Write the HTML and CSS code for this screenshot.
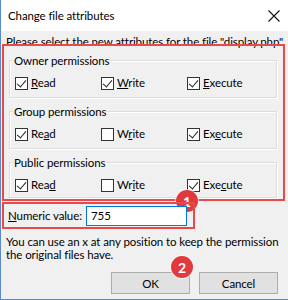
FILE: index.html
```html
<!DOCTYPE html>
<html>
<head>
<meta charset="utf-8">
<link rel="stylesheet" href="styles.css">
</head>
<body>
<div class="window">
  <div class="titlebar">
    <span class="title">Change file attributes</span>
    <svg class="close" width="12" height="12" viewBox="0 0 12 12"><path d="M0.5 0.5 L11.5 11.5 M11.5 0.5 L0.5 11.5" stroke="#111" stroke-width="1.1" fill="none"/></svg>
  </div>
  <div class="content">
    <div class="prompt">Please select the new attributes for the file "display.php".</div>
    <div class="hl hl-perms">
      <div class="group">
        <div class="legend">Owner permissions</div>
        <div class="row">
          <label class="cb"><span class="box on"></span><span><u>R</u>ead</span></label>
          <label class="cb"><span class="box on"></span><span><u>W</u>rite</span></label>
          <label class="cb"><span class="box on"></span><span><u>E</u>xecute</span></label>
        </div>
      </div>
      <div class="group">
        <div class="legend">Group permissions</div>
        <div class="row">
          <label class="cb"><span class="box on"></span><span>Re<u>a</u>d</span></label>
          <label class="cb"><span class="box"></span><span>W<u>r</u>ite</span></label>
          <label class="cb"><span class="box on"></span><span>Ex<u>e</u>cute</span></label>
        </div>
      </div>
      <div class="group last">
        <div class="legend">Public permissions</div>
        <div class="row">
          <label class="cb"><span class="box on"></span><span>Rea<u>d</u></span></label>
          <label class="cb"><span class="box"></span><span>Wr<u>i</u>te</span></label>
          <label class="cb"><span class="box on"></span><span>Exe<u>c</u>ute</span></label>
        </div>
      </div>
      <span class="badge badge1">1</span>
    </div>
    <div class="hl hl-num">
      <span class="numlabel"><u>N</u>umeric value:</span>
      <span class="input">755</span>
    </div>
    <div class="note">You can use an x at any position to keep the permission<br>the original files have.</div>
    <div class="buttons">
      <span class="btn">OK<span class="badge badge2">2</span></span>
      <span class="btn">Cancel</span>
    </div>
  </div>
</div>
</body>
</html>
```
FILE: styles.css
```css
* { box-sizing: border-box; }
html, body { margin: 0; padding: 0; background: #fff; }
body { font-family: "Lato", "Noto Sans", sans-serif; font-size: 11.5px; letter-spacing: -0.1px; color: #000; }
.window {
  width: 288px; height: 300px;
  border-left: 1px solid #5b8ac8;
  border-bottom: 1px solid #5b8ac8;
  display: flex; flex-direction: column;
  background: #f0f0f0;
  overflow: hidden;
}
.titlebar {
  height: 31px; background: #fff; flex: none;
  display: flex; align-items: center; justify-content: space-between;
  padding: 0 8px 0 7px;
}
.title { font-size: 11.5px; }
.close { display: block; }
.content { position: relative; padding: 4px 0 0 0; flex: 1; }
.prompt { padding-left: 5px; line-height: 14px; white-space: nowrap; }
.hl { border: 2px solid #e84a4c; position: relative; }
.hl-perms { margin: -5px 3px 0 1px; padding: 14px 6px 0 5px; height: 157px; }
.group {
  border: 1px solid #dcdcdc;
  box-shadow: inset 1px 1px 0 #fff, 1px 1px 0 #fff;
  padding: 0 0 0 5px;
  height: 38px;
}
.group + .group { margin-top: 13px; }
.group.last { height: 36px; }
.legend { margin: -8px 0 0 -2px; line-height: 15px; height: 15px; background: #f0f0f0; display: inline-block; padding: 0 1px; vertical-align: top; }
.row { display: flex; margin-top: 2px; }
.cb { display: flex; align-items: center; gap: 3px; width: 86px; line-height: 14px; }
.box {
  width: 13px; height: 13px; border: 1px solid #333; background: #fff;
  position: relative; flex: none;
}
.box.on::after {
  content: ""; position: absolute; left: 3px; top: 0px;
  width: 4px; height: 8px;
  border-right: 1.2px solid #222; border-bottom: 1.2px solid #222;
  transform: rotate(40deg);
}
.hl-num {
  margin: 1px 0 0 1px; width: 193px; height: 27px;
  display: flex; align-items: center; padding-left: 4px; gap: 0;
}
.numlabel { white-space: nowrap; width: 78px; }
.input {
  width: 101px; height: 20px; border: 1px solid #0078d7; background: #fff;
  padding: 1px 4px; line-height: 16px;
}
.note { padding: 7px 4px 0 5px; line-height: 12.5px; white-space: nowrap; }
.buttons { display: flex; justify-content: flex-end; gap: 9px; padding: 11px 10px 0 0; }
.btn {
  position: relative;
  width: 79px; height: 22px; border: 1px solid #adadad; background: #e1e1e1;
  display: flex; align-items: center; justify-content: center;
}
.badge {
  position: absolute; width: 22px; height: 22px; border-radius: 50%;
  background: #e0393e; color: #fff; font-weight: bold; font-size: 14px;
  display: flex; align-items: center; justify-content: center;
  box-shadow: 0 0 0 1px rgba(255,255,255,0.6);
}
.badge1 { left: 172px; bottom: -13px; }
.badge2 { right: -4px; top: -17px; }
```
